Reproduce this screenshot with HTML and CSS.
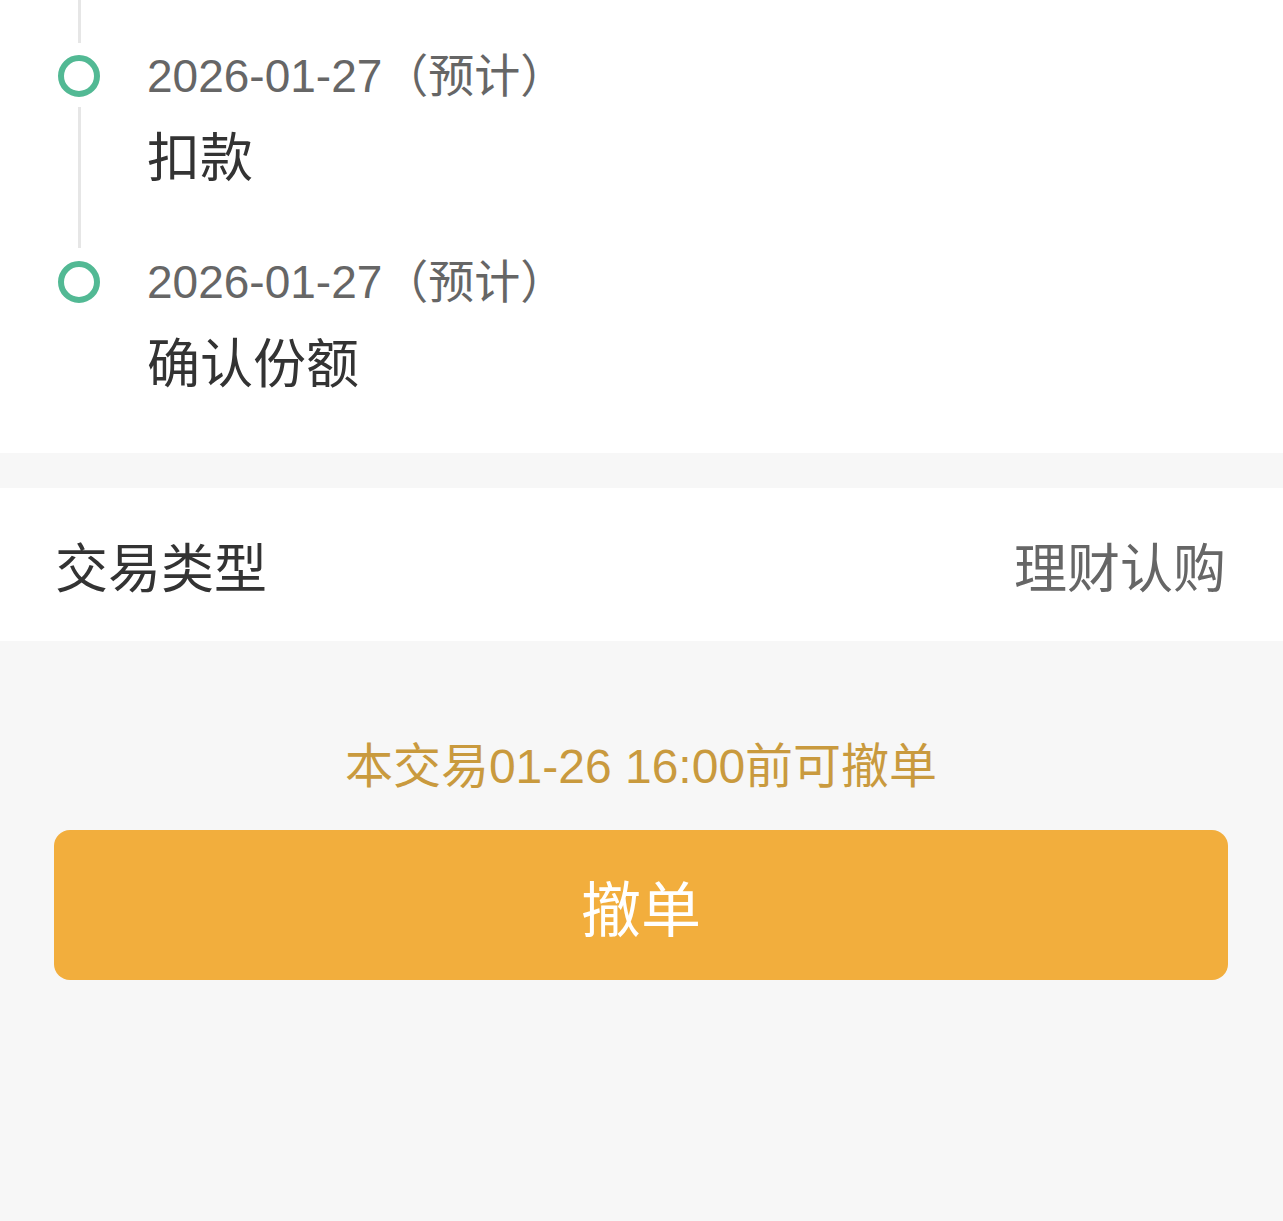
FILE: index.html
```html
<!DOCTYPE html>
<html lang="zh-CN">
<head>
<meta charset="utf-8">
<title>交易详情</title>
<link rel="stylesheet" href="styles.css">
</head>
<body>
<div class="page">
  <section class="timeline">
    <div class="stub"><span class="stub-line"></span></div>
    <div class="item">
      <div class="rail">
        <span class="dot"></span>
        <span class="line"></span>
      </div>
      <div class="content">
        <div class="date">2026-01-27（预计）</div>
        <div class="title">扣款</div>
      </div>
    </div>
    <div class="item last">
      <div class="rail">
        <span class="dot"></span>
      </div>
      <div class="content">
        <div class="date">2026-01-27（预计）</div>
        <div class="title">确认份额</div>
      </div>
    </div>
  </section>
  <div class="band"></div>
  <section class="row">
    <span class="label">交易类型</span>
    <span class="value">理财认购</span>
  </section>
  <section class="footer">
    <p class="notice">本交易01-26 16:00前可撤单</p>
    <button class="btn">撤单</button>
  </section>
</div>
</body>
</html>
```
FILE: styles.css
```css
html, body {
  margin: 0;
  padding: 0;
  background: #f7f7f7;
}
body {
  font-family: "Liberation Sans", "Noto Sans CJK SC", sans-serif;
  width: 1283px;
  height: 1221px;
  overflow: hidden;
}
.page {
  display: flex;
  flex-direction: column;
}
.timeline {
  background: #ffffff;
  display: flex;
  flex-direction: column;
}
.stub {
  width: 158px;
  height: 55px;
  display: flex;
  justify-content: center;
}
.stub-line {
  width: 3px;
  height: 43px;
  background: #e6e6e6;
}
.item {
  display: flex;
  padding-bottom: 72px;
}
.item.last {
  padding-bottom: 58px;
}
.rail {
  width: 158px;
  flex: none;
  display: flex;
  flex-direction: column;
  align-items: center;
  margin-bottom: -72px;
}
.item.last .rail {
  margin-bottom: 0;
}
.dot {
  width: 30px;
  height: 30px;
  border: 6px solid #52b994;
  border-radius: 50%;
  flex: none;
  background: #fff;
}
.line {
  flex: 1;
  width: 3px;
  background: #e6e6e6;
  margin: 10px 0 13px;
}
.content {
  display: flex;
  flex-direction: column;
  margin-left: -11px;
}
.date {
  font-size: 46px;
  line-height: 42px;
  color: #666666;
}
.title {
  font-size: 53px;
  line-height: 60px;
  color: #333333;
  margin-top: 32px;
}
.band {
  height: 35px;
  background: #f7f7f7;
}
.row {
  background: #ffffff;
  height: 153px;
  display: flex;
  align-items: center;
  justify-content: space-between;
  padding: 0 57px 0 55px;
  font-size: 53px;
}
.label {
  color: #333333;
}
.value {
  color: #666666;
}
.footer {
  display: flex;
  flex-direction: column;
  align-items: stretch;
  padding: 96px 55px 0 54px;
}
.notice {
  margin: 0;
  text-align: center;
  font-size: 48px;
  line-height: 60px;
  color: #c99a3e;
}
.btn {
  margin-top: 33px;
  height: 150px;
  border: none;
  border-radius: 16px;
  background: #f2ae3d;
  color: #ffffff;
  font-family: "Liberation Sans", "Noto Sans CJK SC", sans-serif;
  font-size: 60px;
  padding: 0;
}
```
